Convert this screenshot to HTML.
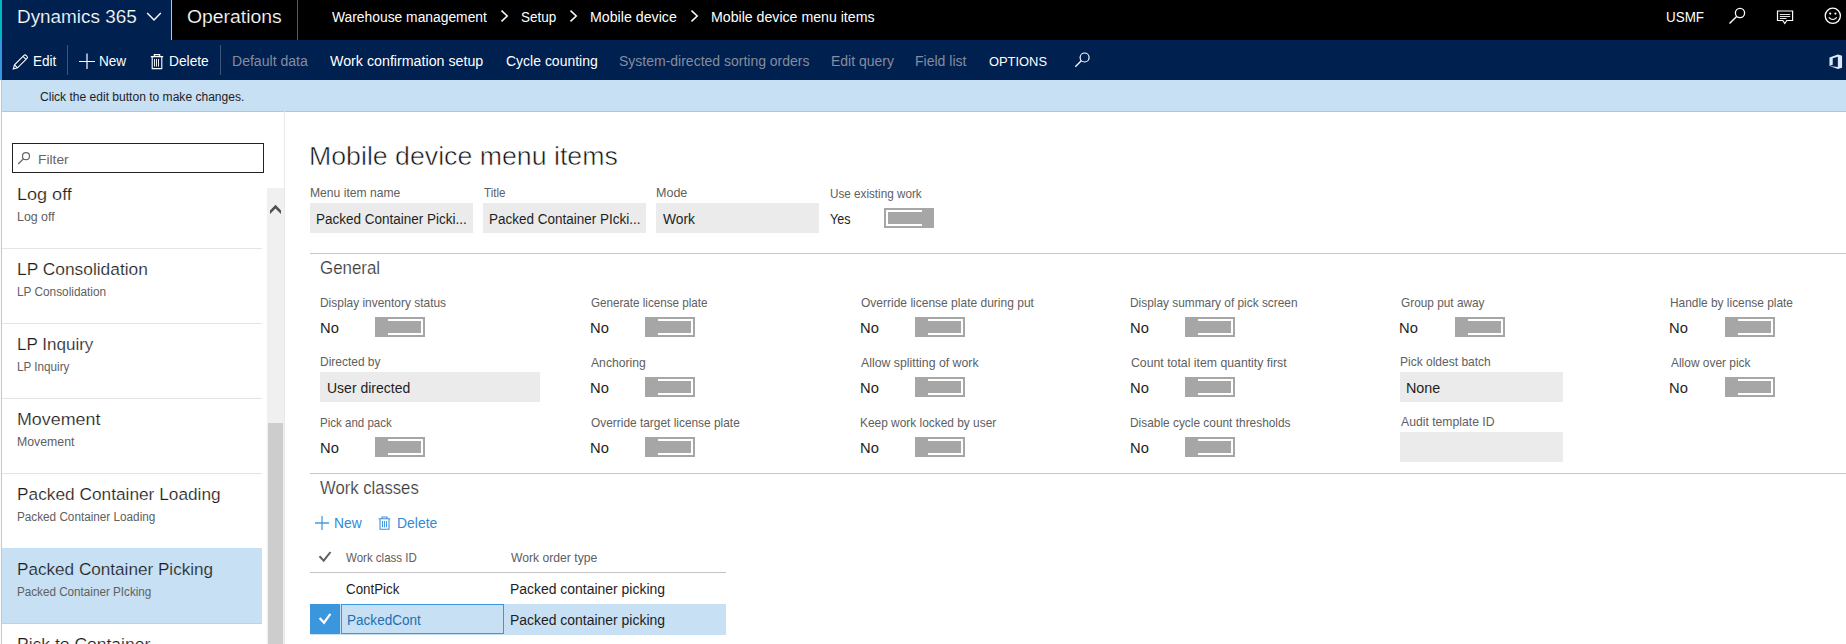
<!DOCTYPE html>
<html><head><meta charset="utf-8"><title>Mobile device menu items</title>
<style>
*{box-sizing:border-box;margin:0;padding:0}
html,body{width:1846px;height:644px;overflow:hidden;background:#fff}
body{font-family:"Liberation Sans",sans-serif;color:#1e1e1e;position:relative}
.a{position:absolute}
.t{position:absolute;white-space:nowrap;line-height:1;transform-origin:0 0}
.inp{position:absolute;background:#ebebeb;height:30px}
.tg{position:absolute;width:50px;height:20px;background:#a6a6a6}
.tg i{position:absolute;left:13px;top:2px;width:35px;height:16px;border:2px solid #fff;border-left:none}
.tg.on i{left:2px;width:36px;border:2px solid #fff;border-right:none}
.sep{position:absolute;left:0;width:260px;height:1px;background:#e4e4e4}
.hl{position:absolute;height:1px;background:#c8c8c8}
</style></head><body>
<!-- top bar -->
<div class="a" style="left:0;top:0;width:1846px;height:40px;background:#000"></div>
<div class="a" style="left:2px;top:0;width:169px;height:40px;background:#002050"></div>
<div class="a" style="left:0;top:40px;width:1846px;height:40px;background:#002050"></div>
<div class="a" style="left:0;top:0;width:2px;height:40px;background:#00b7c3"></div>
<div class="a" style="left:0;top:40px;width:2px;height:40px;background:#3a96dd"></div>
<div class="a" style="left:171px;top:0;width:1px;height:40px;background:#b9c6dc"></div>
<div class="a" style="left:297px;top:0;width:1px;height:40px;background:#5a5a5a"></div>
<svg class="a" style="left:146px;top:11px" width="16" height="12" viewBox="0 0 16 12"><path d="M1.2 2 L8 9 L14.8 2" fill="none" stroke="#fff" stroke-width="1.4"/></svg>
<svg class="a" style="left:500px;top:9px" width="10" height="14" viewBox="0 0 10 14"><path d="M1.5 1.6 L7.2 7 L1.5 12.4" fill="none" stroke="#fff" stroke-width="1.5"/></svg>
<svg class="a" style="left:569px;top:9px" width="10" height="14" viewBox="0 0 10 14"><path d="M1.5 1.6 L7.2 7 L1.5 12.4" fill="none" stroke="#fff" stroke-width="1.5"/></svg>
<svg class="a" style="left:690px;top:9px" width="10" height="14" viewBox="0 0 10 14"><path d="M1.5 1.6 L7.2 7 L1.5 12.4" fill="none" stroke="#fff" stroke-width="1.5"/></svg>
<!-- top right icons -->
<svg class="a" style="left:1728px;top:7px" width="18" height="18" viewBox="0 0 18 18"><circle cx="12" cy="6" r="4.6" fill="none" stroke="#fff" stroke-width="1.3"/><path d="M8.6 9.6 L1.5 16.5" stroke="#fff" stroke-width="1.4"/></svg>
<svg class="a" style="left:1776px;top:9px" width="18" height="16" viewBox="0 0 18 16"><path d="M1.5 2 H16.6 V11.5 H10.8 L8.8 14.5 L6.8 11.5 H1.5 Z" fill="none" stroke="#fff" stroke-width="1.2"/><path d="M3.8 5.5 H14.2 M3.8 7.5 H14.2 M3.8 9.5 H10.5" stroke="#fff" stroke-width="0.9"/></svg>
<svg class="a" style="left:1824px;top:7px" width="18" height="18" viewBox="0 0 18 18"><circle cx="8.8" cy="8.8" r="7.6" fill="none" stroke="#fff" stroke-width="1.3"/><circle cx="6.2" cy="6.6" r="1.05" fill="#fff"/><circle cx="11.4" cy="6.6" r="1.05" fill="#fff"/><path d="M4.8 10.4 Q8.8 14.6 12.8 10.4" fill="none" stroke="#fff" stroke-width="1.2"/></svg>
<!-- action bar icons -->
<svg class="a" style="left:12px;top:53px" width="18" height="18" viewBox="0 0 18 18"><path d="M1.3 16 L2.5 11.8 L12 2.3 Q13 1.3 14 2.3 L15 3.3 Q16 4.3 15 5.3 L5.5 14.8 Z M2.5 11.8 L5.5 14.8 M11 3.3 L14 6.3" fill="none" stroke="#fff" stroke-width="1.1"/></svg>
<div class="a" style="left:67px;top:45px;width:1px;height:30px;background:#41557a"></div>
<svg class="a" style="left:79px;top:53px" width="16" height="16" viewBox="0 0 16 16"><path d="M0 8.5 H16 M8 0.5 V16" stroke="#fff" stroke-width="1.2"/></svg>
<svg class="a" style="left:150px;top:53px" width="14" height="17" viewBox="0 0 14 17"><path d="M0.8 3.6 H13.2 M4.3 3.4 V1.6 H9.7 V3.4 M2.2 3.6 V15.6 H11.8 V3.6 " fill="none" stroke="#fff" stroke-width="1.1"/><path d="M4.5 6 V13.6 M6.5 6 V13.6 M8.5 6 V13.6" stroke="#e8ecf4" stroke-width="1"/></svg>
<div class="a" style="left:220px;top:45px;width:1px;height:30px;background:#41557a"></div>
<svg class="a" style="left:1073px;top:50px" width="18" height="18" viewBox="0 0 18 18"><circle cx="11.6" cy="7.5" r="4.5" fill="none" stroke="#fff" stroke-width="1.2"/><path d="M8.3 10.8 L2.3 16.8" stroke="#fff" stroke-width="1.3"/></svg>
<svg class="a" style="left:1828.5px;top:54px" width="14" height="15.5" viewBox="0 0 15 18" preserveAspectRatio="none"><path d="M0.5 4 L9.5 0.5 L14 2 V16 L9.5 17.5 L0.5 14 L9.5 15 V3.2 L4 4.8 V12.4 L0.5 14 Z" fill="#dce8f7"/></svg>
<!-- info bar -->
<div class="a" style="left:2px;top:80px;width:1844px;height:32px;background:#c7e0f4;border-bottom:1px solid #c2c2c2"></div>
<!-- left panel -->
<div class="a" style="left:0;top:80px;width:2px;height:564px;background:#fafafa;border-right:1px solid #c8c8c8"></div>
<div class="a" style="left:284px;top:111px;width:1px;height:533px;background:#e9e9e9"></div>
<div class="a" style="left:12px;top:143px;width:252px;height:30px;border:1px solid #222;background:#fff"></div>
<svg class="a" style="left:17px;top:151px" width="14" height="14" viewBox="0 0 14 14"><circle cx="9" cy="5.2" r="3.5" fill="none" stroke="#666" stroke-width="1.2"/><path d="M6.5 7.8 L1.2 13" stroke="#666" stroke-width="1.2"/></svg>
<div class="a" id="list" style="left:2px;top:188px;width:264px;height:456px;overflow:hidden">
  <div class="a" style="left:0;top:360px;width:260px;height:75px;background:#c7e0f4"></div>
  <div class="sep" style="top:60px"></div>
  <div class="sep" style="top:135px"></div>
  <div class="sep" style="top:210px"></div>
  <div class="sep" style="top:285px"></div>
  <div class="sep" style="top:435px;background:#cfcfcf"></div>
<span class="t" style="left:14.76px;top:-2.40px;font-size:17.4px;color:#1e1e1e;transform:scaleX(1.0377);-webkit-text-stroke:0.2px #fff">Log off</span>
<span class="t" style="left:14.79px;top:23.30px;font-size:12.3px;color:#606060;transform:scaleX(1.0063)">Log off</span>
<span class="t" style="left:14.80px;top:72.60px;font-size:17.4px;color:#1e1e1e;transform:scaleX(0.9976);-webkit-text-stroke:0.2px #fff">LP Consolidation</span>
<span class="t" style="left:14.84px;top:98.30px;font-size:12.3px;color:#606060;transform:scaleX(0.9606)">LP Consolidation</span>
<span class="t" style="left:14.82px;top:147.60px;font-size:17.4px;color:#1e1e1e;transform:scaleX(0.9793);-webkit-text-stroke:0.2px #fff">LP Inquiry</span>
<span class="t" style="left:14.85px;top:173.30px;font-size:12.3px;color:#606060;transform:scaleX(0.9508)">LP Inquiry</span>
<span class="t" style="left:14.77px;top:222.60px;font-size:17.4px;color:#1e1e1e;transform:scaleX(1.0267);-webkit-text-stroke:0.2px #fff">Movement</span>
<span class="t" style="left:14.80px;top:248.30px;font-size:12.3px;color:#606060;transform:scaleX(1.0002)">Movement</span>
<span class="t" style="left:14.81px;top:297.60px;font-size:17.4px;color:#1e1e1e;transform:scaleX(0.9936);-webkit-text-stroke:0.2px #fff">Packed Container Loading</span>
<span class="t" style="left:14.85px;top:323.30px;font-size:12.3px;color:#606060;transform:scaleX(0.9542)">Packed Container Loading</span>
<span class="t" style="left:14.82px;top:372.60px;font-size:17.4px;color:#1e1e1e;transform:scaleX(0.9850);-webkit-text-stroke:0.2px #c7e0f4">Packed Container Picking</span>
<span class="t" style="left:14.85px;top:398.30px;font-size:12.3px;color:#606060;transform:scaleX(0.9491)">Packed Container PIcking</span>
<span class="t" style="left:14.79px;top:447.60px;font-size:17.4px;color:#1e1e1e;transform:scaleX(1.0066);-webkit-text-stroke:0.2px #fff">Pick to Container</span>
</div>
<!-- scrollbar -->
<div class="a" style="left:267px;top:188px;width:17px;height:456px;background:#f0f0f0"></div>
<div class="a" style="left:268px;top:423px;width:15px;height:221px;background:#cdcdcd"></div>
<svg class="a" style="left:269px;top:204px" width="14" height="11" viewBox="0 0 14 11"><path d="M1 6.5 L6.5 0.8 L12 6.5 V10 L6.5 4.4 L1 10 Z" fill="#505050"/></svg>
<!-- main -->
<div class="inp" style="left:310px;top:203px;width:163px"></div>
<div class="inp" style="left:483px;top:203px;width:163px"></div>
<div class="inp" style="left:656px;top:203px;width:163px"></div>
<div class="tg on" style="left:884px;top:208px"><i></i></div>
<div class="hl" style="left:310px;top:253px;width:1536px"></div>
<div class="inp" style="left:320px;top:372px;width:220px"></div>
<div class="inp" style="left:1400px;top:372px;width:163px"></div>
<div class="inp" style="left:1400px;top:432px;width:163px"></div>
<div class="tg" style="left:375px;top:317px"><i></i></div><div class="tg" style="left:375px;top:437px"><i></i></div><div class="tg" style="left:645px;top:317px"><i></i></div><div class="tg" style="left:645px;top:377px"><i></i></div><div class="tg" style="left:645px;top:437px"><i></i></div><div class="tg" style="left:915px;top:317px"><i></i></div><div class="tg" style="left:915px;top:377px"><i></i></div><div class="tg" style="left:915px;top:437px"><i></i></div><div class="tg" style="left:1185px;top:317px"><i></i></div><div class="tg" style="left:1185px;top:377px"><i></i></div><div class="tg" style="left:1185px;top:437px"><i></i></div><div class="tg" style="left:1455px;top:317px"><i></i></div><div class="tg" style="left:1725px;top:317px"><i></i></div><div class="tg" style="left:1725px;top:377px"><i></i></div>
<div class="hl" style="left:310px;top:473px;width:1536px"></div>
<!-- work classes toolbar -->
<svg class="a" style="left:315px;top:516px" width="14" height="14" viewBox="0 0 14 14"><path d="M0 7 H14 M7 0 V14" stroke="#4a9ce0" stroke-width="1.3"/></svg>
<svg class="a" style="left:378px;top:516px" width="13" height="14" viewBox="0 0 13 14"><path d="M0.6 2.8 H12.4 M4 2.6 V1 H9 V2.6 M2 2.8 V13.2 H11 V2.8 " fill="none" stroke="#3f93dc" stroke-width="1.1"/><path d="M4.5 5 V11.4 M6.5 5 V11.4 M8.5 5 V11.4" stroke="#4a9ce0" stroke-width="1"/></svg>
<!-- grid -->
<svg class="a" style="left:318px;top:550px" width="14" height="13" viewBox="0 0 14 13"><path d="M1.5 6.3 L5.7 10.7 L12.5 2" fill="none" stroke="#606060" stroke-width="2"/></svg>
<div class="hl" style="left:310px;top:572px;width:416px;background:#c4c4c4"></div>
<div class="a" style="left:310px;top:604px;width:416px;height:31px;background:#c7e0f4"></div>
<div class="a" style="left:310px;top:604px;width:30px;height:30px;background:#3a96dd"></div>
<div class="a" style="left:341px;top:604px;width:163px;height:30px;border:1px solid #3a96dd"></div>
<svg class="a" style="left:318px;top:612px" width="14" height="13" viewBox="0 0 14 13"><path d="M1.6 6 L6 10.7 L12.4 1.8" fill="none" stroke="#fff" stroke-width="2.2"/></svg>
<span class="t" style="left:16.79px;top:7.50px;font-size:18.8px;color:#fff;transform:scaleX(1.0064);-webkit-text-stroke:0.2px #002050">Dynamics 365</span>
<span class="t" style="left:187.30px;top:7.50px;font-size:18.8px;color:#fff;transform:scaleX(1.0308);-webkit-text-stroke:0.2px #000">Operations</span>
<span class="t" style="left:332.30px;top:10.20px;font-size:14px;color:#fff;transform:scaleX(0.9886)">Warehouse management</span>
<span class="t" style="left:521.30px;top:10.20px;font-size:14px;color:#fff;transform:scaleX(0.9647)">Setup</span>
<span class="t" style="left:590.29px;top:10.20px;font-size:14px;color:#fff;transform:scaleX(1.0140)">Mobile device</span>
<span class="t" style="left:710.79px;top:10.20px;font-size:14px;color:#fff;transform:scaleX(1.0103)">Mobile device menu items</span>
<span class="t" style="left:1665.84px;top:10.00px;font-size:14px;color:#fff;transform:scaleX(0.9577)">USMF</span>
<span class="t" style="left:32.83px;top:54.00px;font-size:14px;color:#fff;transform:scaleX(0.9684)">Edit</span>
<span class="t" style="left:99.33px;top:54.00px;font-size:14px;color:#fff;transform:scaleX(0.9679)">New</span>
<span class="t" style="left:169.32px;top:54.00px;font-size:14px;color:#fff;transform:scaleX(0.9828)">Delete</span>
<span class="t" style="left:231.80px;top:54.00px;font-size:14px;color:#868c9d;transform:scaleX(1.0039)">Default data</span>
<span class="t" style="left:330.30px;top:54.00px;font-size:14px;color:#fff;transform:scaleX(1.0172)">Work confirmation setup</span>
<span class="t" style="left:505.80px;top:54.00px;font-size:14px;color:#fff;transform:scaleX(0.9995)">Cycle counting</span>
<span class="t" style="left:619.30px;top:54.00px;font-size:14px;color:#868c9d;transform:scaleX(0.9993)">System-directed sorting orders</span>
<span class="t" style="left:831.30px;top:54.00px;font-size:14px;color:#868c9d;transform:scaleX(0.9994)">Edit query</span>
<span class="t" style="left:915.30px;top:54.00px;font-size:14px;color:#868c9d;transform:scaleX(1.0009)">Field list</span>
<span class="t" style="left:988.80px;top:55.20px;font-size:13.5px;color:#fff;transform:scaleX(0.9547)">OPTIONS</span>
<span class="t" style="left:39.80px;top:90.50px;font-size:12px;color:#1e1e1e;transform:scaleX(1.0044)">Click the edit button to make changes.</span>
<span class="t" style="left:37.68px;top:152.80px;font-size:13.5px;color:#666;transform:scaleX(1.0236)">Filter</span>
<span class="t" style="left:308.78px;top:142.50px;font-size:26.5px;color:#141414;transform:scaleX(1.0079);-webkit-text-stroke:0.55px #fff">Mobile device menu items</span>
<span class="t" style="left:309.81px;top:187.00px;font-size:12.2px;color:#606060;transform:scaleX(0.9945)">Menu item name</span>
<span class="t" style="left:483.60px;top:187.00px;font-size:12.2px;color:#606060;transform:scaleX(0.9520)">Title</span>
<span class="t" style="left:655.77px;top:187.00px;font-size:12.2px;color:#606060;transform:scaleX(1.0266)">Mode</span>
<span class="t" style="left:829.60px;top:188.00px;font-size:12.2px;color:#606060;transform:scaleX(0.9595)">Use existing work</span>
<span class="t" style="left:315.84px;top:212.00px;font-size:14px;color:#1e1e1e;transform:scaleX(0.9643)">Packed Container Picki...</span>
<span class="t" style="left:488.64px;top:212.00px;font-size:14px;color:#1e1e1e;transform:scaleX(0.9640)">Packed Container PIcki...</span>
<span class="t" style="left:663.30px;top:212.00px;font-size:14px;color:#1e1e1e;transform:scaleX(0.9878)">Work</span>
<span class="t" style="left:829.60px;top:212.00px;font-size:14px;color:#1e1e1e;transform:scaleX(0.8976)">Yes</span>
<span class="t" style="left:320.10px;top:260.00px;font-size:17.8px;color:#3a3a3a;transform:scaleX(0.9501);-webkit-text-stroke:0.2px #fff">General</span>
<span class="t" style="left:319.90px;top:480.30px;font-size:17.8px;color:#3a3a3a;transform:scaleX(0.9365);-webkit-text-stroke:0.2px #fff">Work classes</span>
<span class="t" style="left:319.62px;top:297.00px;font-size:12.2px;color:#606060;transform:scaleX(0.9796)">Display inventory status</span>
<span class="t" style="left:319.55px;top:321.00px;font-size:14px;color:#1e1e1e;transform:scaleX(1.0520)">No</span>
<span class="t" style="left:319.62px;top:356.00px;font-size:12.2px;color:#606060;transform:scaleX(0.9814)">Directed by</span>
<span class="t" style="left:319.65px;top:417.00px;font-size:12.2px;color:#606060;transform:scaleX(0.9462)">Pick and pack</span>
<span class="t" style="left:319.55px;top:441.00px;font-size:14px;color:#1e1e1e;transform:scaleX(1.0520)">No</span>
<span class="t" style="left:590.60px;top:297.00px;font-size:12.2px;color:#606060;transform:scaleX(0.9552)">Generate license plate</span>
<span class="t" style="left:589.55px;top:321.00px;font-size:14px;color:#1e1e1e;transform:scaleX(1.0520)">No</span>
<span class="t" style="left:590.60px;top:357.00px;font-size:12.2px;color:#606060;transform:scaleX(0.9981)">Anchoring</span>
<span class="t" style="left:589.55px;top:381.00px;font-size:14px;color:#1e1e1e;transform:scaleX(1.0520)">No</span>
<span class="t" style="left:590.60px;top:417.00px;font-size:12.2px;color:#606060;transform:scaleX(0.9761)">Override target license plate</span>
<span class="t" style="left:589.55px;top:441.00px;font-size:14px;color:#1e1e1e;transform:scaleX(1.0520)">No</span>
<span class="t" style="left:860.60px;top:297.00px;font-size:12.2px;color:#606060;transform:scaleX(0.9854)">Override license plate during put</span>
<span class="t" style="left:859.55px;top:321.00px;font-size:14px;color:#1e1e1e;transform:scaleX(1.0520)">No</span>
<span class="t" style="left:860.60px;top:357.00px;font-size:12.2px;color:#606060;transform:scaleX(1.0093)">Allow splitting of work</span>
<span class="t" style="left:859.55px;top:381.00px;font-size:14px;color:#1e1e1e;transform:scaleX(1.0520)">No</span>
<span class="t" style="left:859.62px;top:417.00px;font-size:12.2px;color:#606060;transform:scaleX(0.9762)">Keep work locked by user</span>
<span class="t" style="left:859.55px;top:441.00px;font-size:14px;color:#1e1e1e;transform:scaleX(1.0520)">No</span>
<span class="t" style="left:1129.73px;top:297.00px;font-size:12.2px;color:#606060;transform:scaleX(0.9739)">Display summary of pick screen</span>
<span class="t" style="left:1129.65px;top:321.00px;font-size:14px;color:#1e1e1e;transform:scaleX(1.0520)">No</span>
<span class="t" style="left:1130.70px;top:357.00px;font-size:12.2px;color:#606060;transform:scaleX(1.0074)">Count total item quantity first</span>
<span class="t" style="left:1129.65px;top:381.00px;font-size:14px;color:#1e1e1e;transform:scaleX(1.0520)">No</span>
<span class="t" style="left:1129.72px;top:417.00px;font-size:12.2px;color:#606060;transform:scaleX(0.9754)">Disable cycle count thresholds</span>
<span class="t" style="left:1129.65px;top:441.00px;font-size:14px;color:#1e1e1e;transform:scaleX(1.0520)">No</span>
<span class="t" style="left:1400.50px;top:297.00px;font-size:12.2px;color:#606060;transform:scaleX(0.9707)">Group put away</span>
<span class="t" style="left:1399.45px;top:321.00px;font-size:14px;color:#1e1e1e;transform:scaleX(1.0520)">No</span>
<span class="t" style="left:1399.51px;top:356.00px;font-size:12.2px;color:#606060;transform:scaleX(0.9850)">Pick oldest batch</span>
<span class="t" style="left:1400.50px;top:416.00px;font-size:12.2px;color:#606060;transform:scaleX(1.0002)">Audit template ID</span>
<span class="t" style="left:1669.52px;top:297.00px;font-size:12.2px;color:#606060;transform:scaleX(0.9757)">Handle by license plate</span>
<span class="t" style="left:1669.45px;top:321.00px;font-size:14px;color:#1e1e1e;transform:scaleX(1.0520)">No</span>
<span class="t" style="left:1670.50px;top:357.00px;font-size:12.2px;color:#606060;transform:scaleX(0.9783)">Allow over pick</span>
<span class="t" style="left:1669.45px;top:381.00px;font-size:14px;color:#1e1e1e;transform:scaleX(1.0520)">No</span>
<span class="t" style="left:326.60px;top:380.70px;font-size:14px;color:#1e1e1e;transform:scaleX(0.9992)">User directed</span>
<span class="t" style="left:1406.47px;top:380.70px;font-size:14px;color:#1e1e1e;transform:scaleX(1.0250)">None</span>
<span class="t" style="left:333.61px;top:516.10px;font-size:14px;color:#338ad6;transform:scaleX(0.9894)">New</span>
<span class="t" style="left:396.60px;top:516.10px;font-size:14px;color:#338ad6;transform:scaleX(0.9954)">Delete</span>
<span class="t" style="left:346.30px;top:552.40px;font-size:12.2px;color:#606060;transform:scaleX(0.9449)">Work class ID</span>
<span class="t" style="left:510.60px;top:552.40px;font-size:12.2px;color:#606060;transform:scaleX(0.9978)">Work order type</span>
<span class="t" style="left:346.30px;top:582.30px;font-size:14px;color:#1e1e1e;transform:scaleX(0.9523)">ContPick</span>
<span class="t" style="left:509.60px;top:582.30px;font-size:14px;color:#1e1e1e;transform:scaleX(0.9957)">Packed container picking</span>
<span class="t" style="left:346.63px;top:613.40px;font-size:14px;color:#1f6fb5;transform:scaleX(0.9684)">PackedCont</span>
<span class="t" style="left:509.60px;top:613.40px;font-size:14px;color:#1e1e1e;transform:scaleX(0.9957)">Packed container picking</span>
</body></html>
